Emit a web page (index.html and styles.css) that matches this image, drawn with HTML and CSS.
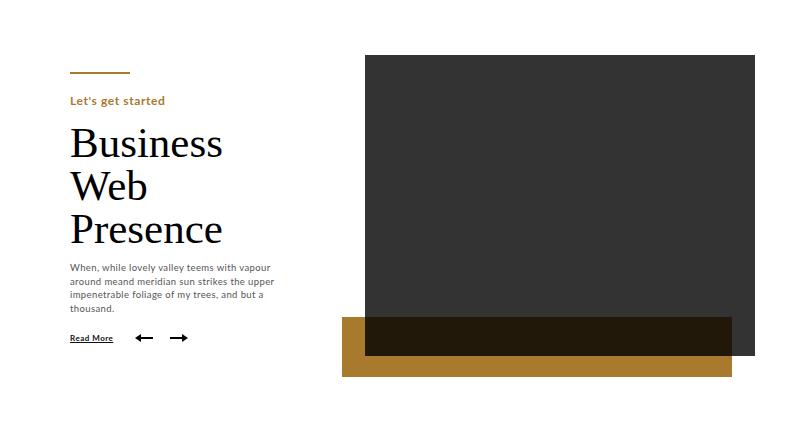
FILE: index.html
```html
<!DOCTYPE html>
<html lang="en">
<head>
<meta charset="utf-8">
<title>Business Web Presence</title>
<link rel="stylesheet" href="styles.css">
</head>
<body>
<section class="hero">
  <div class="text">
    <div class="rule"></div>
    <p class="eyebrow">Let's get started</p>
    <h1 class="title">Business Web Presence</h1>
    <p class="lead">When, while lovely valley teems with vapour around meand meridian sun strikes the upper impenetrable foliage of my trees, and but a thousand.</p>
    <div class="actions">
      <a class="more" href="#">Read More</a>
      <span class="arrow">
        <svg width="18" height="10" viewBox="0 0 18 10"><path d="M18 5H5" stroke="#000" stroke-width="2"/><path d="M0 5L6 1V9Z" fill="#000"/></svg>
      </span>
      <span class="arrow">
        <svg width="18" height="10" viewBox="0 0 18 10"><path d="M0 5H13" stroke="#000" stroke-width="2"/><path d="M18 5L12 1V9Z" fill="#000"/></svg>
      </span>
    </div>
  </div>
  <div class="media">
    <div class="accent"></div>
    <div class="photo"></div>
  </div>
</section>
</body>
</html>
```
FILE: styles.css
```css
html, body {
  margin: 0;
  padding: 0;
  background: #fff;
}
body {
  font-family: Lato, "Open Sans", sans-serif;
  width: 800px;
  height: 430px;
  overflow: hidden;
}
.hero {
  display: flex;
  align-items: flex-start;
  padding: 55px 45px 0 70px;
}
.text {
  width: 218px;
  padding-top: 17px;
}
.rule {
  width: 60px;
  height: 2px;
  background: #a87a2e;
}
.eyebrow {
  margin: 20px 0 0;
  font-size: 12px;
  line-height: 14px;
  font-weight: 700;
  letter-spacing: 0.6px;
  color: #a87a2e;
}
.title {
  margin: 13px 0 0;
  font-family: "Liberation Serif", "Times New Roman", serif;
  font-weight: 400;
  font-size: 43px;
  line-height: 43px;
  color: #000;
}
.lead {
  margin: 11px 0 0;
  font-size: 9.5px;
  line-height: 13.7px;
  letter-spacing: 0.38px;
  color: #555;
}
.actions {
  display: flex;
  align-items: center;
  margin-top: 16px;
  height: 12px;
}
.more {
  font-size: 8px;
  font-weight: 700;
  letter-spacing: 0.5px;
  color: #111;
  text-decoration: underline;
  margin-right: 22px;
}
.arrow {
  display: flex;
  margin-right: 17px;
}
.media {
  position: relative;
  margin-left: auto;
  width: 390px;
  height: 301px;
}
.accent {
  position: absolute;
  left: -23px;
  top: 262px;
  width: 390px;
  height: 60px;
  background: #a87a2e;
}
.photo {
  position: relative;
  width: 100%;
  height: 100%;
  background: rgba(0, 0, 0, 0.8);
}
```
